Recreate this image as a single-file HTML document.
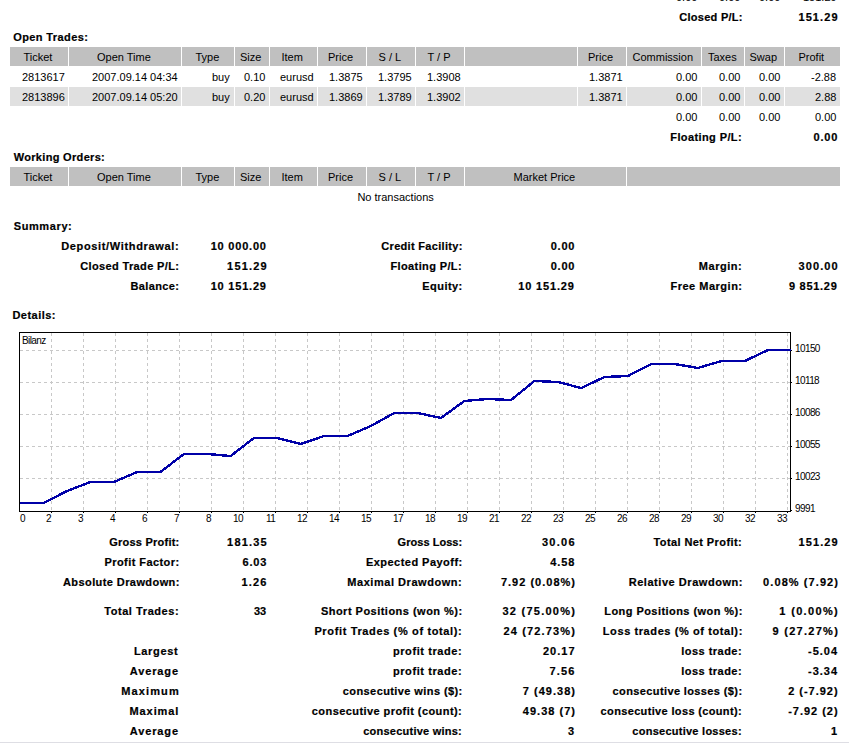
<!DOCTYPE html>
<html><head><meta charset="utf-8"><style>
html,body{margin:0;padding:0;background:#fff;width:849px;height:744px;overflow:hidden;position:relative}
.t{position:absolute;font:11px/13px 'Liberation Sans', sans-serif;color:#000;white-space:nowrap}
.r{position:absolute}
.b{font-weight:bold;-webkit-text-stroke:0.2px #000}
</style></head><body>
<div class="r" style="left:10px;top:47px;width:58px;height:19px;background:#c0c0c0"></div>
<div class="r" style="left:69px;top:47px;width:112px;height:19px;background:#c0c0c0"></div>
<div class="r" style="left:182px;top:47px;width:52px;height:19px;background:#c0c0c0"></div>
<div class="r" style="left:235px;top:47px;width:34px;height:19px;background:#c0c0c0"></div>
<div class="r" style="left:270px;top:47px;width:47px;height:19px;background:#c0c0c0"></div>
<div class="r" style="left:318px;top:47px;width:48px;height:19px;background:#c0c0c0"></div>
<div class="r" style="left:367px;top:47px;width:48px;height:19px;background:#c0c0c0"></div>
<div class="r" style="left:416px;top:47px;width:48px;height:19px;background:#c0c0c0"></div>
<div class="r" style="left:465px;top:47px;width:112px;height:19px;background:#c0c0c0"></div>
<div class="r" style="left:578px;top:47px;width:48px;height:19px;background:#c0c0c0"></div>
<div class="r" style="left:627px;top:47px;width:74px;height:19px;background:#c0c0c0"></div>
<div class="r" style="left:702px;top:47px;width:42px;height:19px;background:#c0c0c0"></div>
<div class="r" style="left:745px;top:47px;width:39px;height:19px;background:#c0c0c0"></div>
<div class="r" style="left:785px;top:47px;width:55px;height:19px;background:#c0c0c0"></div>
<div class="r" style="left:10px;top:87px;width:58px;height:19px;background:#e0e0e0"></div>
<div class="r" style="left:69px;top:87px;width:112px;height:19px;background:#e0e0e0"></div>
<div class="r" style="left:182px;top:87px;width:52px;height:19px;background:#e0e0e0"></div>
<div class="r" style="left:235px;top:87px;width:34px;height:19px;background:#e0e0e0"></div>
<div class="r" style="left:270px;top:87px;width:47px;height:19px;background:#e0e0e0"></div>
<div class="r" style="left:318px;top:87px;width:48px;height:19px;background:#e0e0e0"></div>
<div class="r" style="left:367px;top:87px;width:48px;height:19px;background:#e0e0e0"></div>
<div class="r" style="left:416px;top:87px;width:48px;height:19px;background:#e0e0e0"></div>
<div class="r" style="left:465px;top:87px;width:112px;height:19px;background:#e0e0e0"></div>
<div class="r" style="left:578px;top:87px;width:48px;height:19px;background:#e0e0e0"></div>
<div class="r" style="left:627px;top:87px;width:74px;height:19px;background:#e0e0e0"></div>
<div class="r" style="left:702px;top:87px;width:42px;height:19px;background:#e0e0e0"></div>
<div class="r" style="left:745px;top:87px;width:39px;height:19px;background:#e0e0e0"></div>
<div class="r" style="left:785px;top:87px;width:55px;height:19px;background:#e0e0e0"></div>
<div class="r" style="left:10px;top:167px;width:58px;height:19px;background:#c0c0c0"></div>
<div class="r" style="left:69px;top:167px;width:112px;height:19px;background:#c0c0c0"></div>
<div class="r" style="left:182px;top:167px;width:52px;height:19px;background:#c0c0c0"></div>
<div class="r" style="left:235px;top:167px;width:34px;height:19px;background:#c0c0c0"></div>
<div class="r" style="left:270px;top:167px;width:47px;height:19px;background:#c0c0c0"></div>
<div class="r" style="left:318px;top:167px;width:48px;height:19px;background:#c0c0c0"></div>
<div class="r" style="left:367px;top:167px;width:48px;height:19px;background:#c0c0c0"></div>
<div class="r" style="left:416px;top:167px;width:48px;height:19px;background:#c0c0c0"></div>
<div class="r" style="left:465px;top:167px;width:161px;height:19px;background:#c0c0c0"></div>
<div class="r" style="left:627px;top:167px;width:213px;height:19px;background:#c0c0c0"></div>
<div class="r" style="left:0px;top:742px;width:849px;height:1px;background:#dedee4"></div>
<svg width="849" height="744" style="position:absolute;left:0;top:0" shape-rendering="crispEdges">
<line x1="51.5" y1="333" x2="51.5" y2="511" stroke="#c8c8c8" stroke-dasharray="3 3"/>
<line x1="51.5" y1="512" x2="51.5" y2="513" stroke="#000"/>
<line x1="83.5" y1="333" x2="83.5" y2="511" stroke="#c8c8c8" stroke-dasharray="3 3"/>
<line x1="83.5" y1="512" x2="83.5" y2="513" stroke="#000"/>
<line x1="115.5" y1="333" x2="115.5" y2="511" stroke="#c8c8c8" stroke-dasharray="3 3"/>
<line x1="115.5" y1="512" x2="115.5" y2="513" stroke="#000"/>
<line x1="147.5" y1="333" x2="147.5" y2="511" stroke="#c8c8c8" stroke-dasharray="3 3"/>
<line x1="147.5" y1="512" x2="147.5" y2="513" stroke="#000"/>
<line x1="179.5" y1="333" x2="179.5" y2="511" stroke="#c8c8c8" stroke-dasharray="3 3"/>
<line x1="179.5" y1="512" x2="179.5" y2="513" stroke="#000"/>
<line x1="211.5" y1="333" x2="211.5" y2="511" stroke="#c8c8c8" stroke-dasharray="3 3"/>
<line x1="211.5" y1="512" x2="211.5" y2="513" stroke="#000"/>
<line x1="243.5" y1="333" x2="243.5" y2="511" stroke="#c8c8c8" stroke-dasharray="3 3"/>
<line x1="243.5" y1="512" x2="243.5" y2="513" stroke="#000"/>
<line x1="275.5" y1="333" x2="275.5" y2="511" stroke="#c8c8c8" stroke-dasharray="3 3"/>
<line x1="275.5" y1="512" x2="275.5" y2="513" stroke="#000"/>
<line x1="307.5" y1="333" x2="307.5" y2="511" stroke="#c8c8c8" stroke-dasharray="3 3"/>
<line x1="307.5" y1="512" x2="307.5" y2="513" stroke="#000"/>
<line x1="339.5" y1="333" x2="339.5" y2="511" stroke="#c8c8c8" stroke-dasharray="3 3"/>
<line x1="339.5" y1="512" x2="339.5" y2="513" stroke="#000"/>
<line x1="371.5" y1="333" x2="371.5" y2="511" stroke="#c8c8c8" stroke-dasharray="3 3"/>
<line x1="371.5" y1="512" x2="371.5" y2="513" stroke="#000"/>
<line x1="403.5" y1="333" x2="403.5" y2="511" stroke="#c8c8c8" stroke-dasharray="3 3"/>
<line x1="403.5" y1="512" x2="403.5" y2="513" stroke="#000"/>
<line x1="435.5" y1="333" x2="435.5" y2="511" stroke="#c8c8c8" stroke-dasharray="3 3"/>
<line x1="435.5" y1="512" x2="435.5" y2="513" stroke="#000"/>
<line x1="467.5" y1="333" x2="467.5" y2="511" stroke="#c8c8c8" stroke-dasharray="3 3"/>
<line x1="467.5" y1="512" x2="467.5" y2="513" stroke="#000"/>
<line x1="499.5" y1="333" x2="499.5" y2="511" stroke="#c8c8c8" stroke-dasharray="3 3"/>
<line x1="499.5" y1="512" x2="499.5" y2="513" stroke="#000"/>
<line x1="531.5" y1="333" x2="531.5" y2="511" stroke="#c8c8c8" stroke-dasharray="3 3"/>
<line x1="531.5" y1="512" x2="531.5" y2="513" stroke="#000"/>
<line x1="563.5" y1="333" x2="563.5" y2="511" stroke="#c8c8c8" stroke-dasharray="3 3"/>
<line x1="563.5" y1="512" x2="563.5" y2="513" stroke="#000"/>
<line x1="595.5" y1="333" x2="595.5" y2="511" stroke="#c8c8c8" stroke-dasharray="3 3"/>
<line x1="595.5" y1="512" x2="595.5" y2="513" stroke="#000"/>
<line x1="627.5" y1="333" x2="627.5" y2="511" stroke="#c8c8c8" stroke-dasharray="3 3"/>
<line x1="627.5" y1="512" x2="627.5" y2="513" stroke="#000"/>
<line x1="659.5" y1="333" x2="659.5" y2="511" stroke="#c8c8c8" stroke-dasharray="3 3"/>
<line x1="659.5" y1="512" x2="659.5" y2="513" stroke="#000"/>
<line x1="691.5" y1="333" x2="691.5" y2="511" stroke="#c8c8c8" stroke-dasharray="3 3"/>
<line x1="691.5" y1="512" x2="691.5" y2="513" stroke="#000"/>
<line x1="723.5" y1="333" x2="723.5" y2="511" stroke="#c8c8c8" stroke-dasharray="3 3"/>
<line x1="723.5" y1="512" x2="723.5" y2="513" stroke="#000"/>
<line x1="755.5" y1="333" x2="755.5" y2="511" stroke="#c8c8c8" stroke-dasharray="3 3"/>
<line x1="755.5" y1="512" x2="755.5" y2="513" stroke="#000"/>
<line x1="787.5" y1="333" x2="787.5" y2="511" stroke="#c8c8c8" stroke-dasharray="3 3"/>
<line x1="787.5" y1="512" x2="787.5" y2="513" stroke="#000"/>
<line x1="20" y1="350.5" x2="790" y2="350.5" stroke="#c8c8c8" stroke-dasharray="3 3"/>
<line x1="20" y1="382.5" x2="790" y2="382.5" stroke="#c8c8c8" stroke-dasharray="3 3"/>
<line x1="20" y1="414.5" x2="790" y2="414.5" stroke="#c8c8c8" stroke-dasharray="3 3"/>
<line x1="20" y1="446.5" x2="790" y2="446.5" stroke="#c8c8c8" stroke-dasharray="3 3"/>
<line x1="20" y1="478.5" x2="790" y2="478.5" stroke="#c8c8c8" stroke-dasharray="3 3"/>
<line x1="791" y1="350.5" x2="792" y2="350.5" stroke="#000"/>
<line x1="791" y1="382.5" x2="792" y2="382.5" stroke="#000"/>
<line x1="791" y1="414.5" x2="792" y2="414.5" stroke="#000"/>
<line x1="791" y1="446.5" x2="792" y2="446.5" stroke="#000"/>
<line x1="791" y1="478.5" x2="792" y2="478.5" stroke="#000"/>
<line x1="791" y1="510.5" x2="792" y2="510.5" stroke="#000"/>
<rect x="19.5" y="332.5" width="771" height="179" fill="none" stroke="#000"/>
<polyline points="20.3,503.0 43.7,503.0 67.0,491.0 90.4,482.0 113.8,482.0 137.2,472.0 160.5,472.0 183.9,454.0 207.3,454.0 230.6,456.0 254.0,438.0 277.4,438.0 300.7,444.0 324.1,436.0 347.5,436.0 370.9,426.0 394.2,413.0 417.6,413.0 441.0,418.0 464.3,401.0 487.7,399.0 511.1,400.0 534.4,381.0 557.8,382.0 581.2,388.0 604.5,377.0 627.9,376.0 651.3,364.0 674.7,364.0 698.0,368.0 721.4,361.0 744.8,361.0 768.1,350.0 790.5,350.0" fill="none" stroke="#0000a8" stroke-width="2.4"/>
</svg>
<div class="t" style="left:676.00px;top:-9px;">0.00</div>
<div class="t" style="left:719.00px;top:-9px;">0.00</div>
<div class="t" style="left:759.00px;top:-9px;">0.00</div>
<div class="t" style="left:803.00px;top:-9px;">151.29</div>
<div class="t b" style="left:679.20px;top:11px;letter-spacing:0.280px;">Closed P/L:</div>
<div class="t b" style="left:798.40px;top:11px;letter-spacing:1.120px;">151.29</div>
<div class="t b" style="left:13.20px;top:31px;letter-spacing:0.400px;">Open Trades:</div>
<div class="t" style="left:23.50px;top:51px;">Ticket</div>
<div class="t" style="left:97.00px;top:51px;">Open Time</div>
<div class="t" style="left:195.50px;top:51px;">Type</div>
<div class="t" style="left:240.00px;top:51px;">Size</div>
<div class="t" style="left:281.50px;top:51px;">Item</div>
<div class="t" style="left:328.00px;top:51px;">Price</div>
<div class="t" style="left:378.50px;top:51px;">S / L</div>
<div class="t" style="left:427.50px;top:51px;">T / P</div>
<div class="t" style="left:588.00px;top:51px;">Price</div>
<div class="t" style="left:632.50px;top:51px;">Commission</div>
<div class="t" style="left:708.00px;top:51px;">Taxes</div>
<div class="t" style="left:749.50px;top:51px;">Swap</div>
<div class="t" style="left:798.50px;top:51px;">Profit</div>
<div class="t" style="left:22.00px;top:71px;">2813617</div>
<div class="t" style="left:92.00px;top:71px;">2007.09.14 04:34</div>
<div class="t" style="left:212.00px;top:71px;">buy</div>
<div class="t" style="left:244.00px;top:71px;">0.10</div>
<div class="t" style="left:280.00px;top:71px;">eurusd</div>
<div class="t" style="left:329.00px;top:71px;">1.3875</div>
<div class="t" style="left:378.00px;top:71px;">1.3795</div>
<div class="t" style="left:427.00px;top:71px;">1.3908</div>
<div class="t" style="left:589.00px;top:71px;">1.3871</div>
<div class="t" style="left:676.00px;top:71px;">0.00</div>
<div class="t" style="left:719.00px;top:71px;">0.00</div>
<div class="t" style="left:759.00px;top:71px;">0.00</div>
<div class="t" style="left:811.00px;top:71px;">-2.88</div>
<div class="t" style="left:22.00px;top:91px;">2813896</div>
<div class="t" style="left:92.00px;top:91px;">2007.09.14 05:20</div>
<div class="t" style="left:212.00px;top:91px;">buy</div>
<div class="t" style="left:244.00px;top:91px;">0.20</div>
<div class="t" style="left:280.00px;top:91px;">eurusd</div>
<div class="t" style="left:329.00px;top:91px;">1.3869</div>
<div class="t" style="left:378.00px;top:91px;">1.3789</div>
<div class="t" style="left:427.00px;top:91px;">1.3902</div>
<div class="t" style="left:589.00px;top:91px;">1.3871</div>
<div class="t" style="left:676.00px;top:91px;">0.00</div>
<div class="t" style="left:719.00px;top:91px;">0.00</div>
<div class="t" style="left:759.00px;top:91px;">0.00</div>
<div class="t" style="left:815.00px;top:91px;">2.88</div>
<div class="t" style="left:676.00px;top:111px;">0.00</div>
<div class="t" style="left:719.00px;top:111px;">0.00</div>
<div class="t" style="left:759.00px;top:111px;">0.00</div>
<div class="t" style="left:815.00px;top:111px;">0.00</div>
<div class="t b" style="left:670.30px;top:131px;letter-spacing:0.392px;">Floating P/L:</div>
<div class="t b" style="left:813.60px;top:131px;letter-spacing:0.800px;">0.00</div>
<div class="t b" style="left:13.70px;top:151px;letter-spacing:0.321px;">Working Orders:</div>
<div class="t" style="left:23.50px;top:171px;">Ticket</div>
<div class="t" style="left:97.00px;top:171px;">Open Time</div>
<div class="t" style="left:195.50px;top:171px;">Type</div>
<div class="t" style="left:240.00px;top:171px;">Size</div>
<div class="t" style="left:281.50px;top:171px;">Item</div>
<div class="t" style="left:328.00px;top:171px;">Price</div>
<div class="t" style="left:378.50px;top:171px;">S / L</div>
<div class="t" style="left:427.50px;top:171px;">T / P</div>
<div class="t" style="left:513.50px;top:171px;">Market Price</div>
<div class="t" style="left:357.40px;top:191px;">No transactions</div>
<div class="t b" style="left:13.70px;top:220px;letter-spacing:0.614px;">Summary:</div>
<div class="t b" style="left:61.20px;top:240px;letter-spacing:0.656px;">Deposit/Withdrawal:</div>
<div class="t b" style="left:210.70px;top:240px;letter-spacing:0.788px;">10 000.00</div>
<div class="t b" style="left:381.30px;top:240px;letter-spacing:0.313px;">Credit Facility:</div>
<div class="t b" style="left:550.70px;top:240px;letter-spacing:0.767px;">0.00</div>
<div class="t b" style="left:80.30px;top:260px;letter-spacing:0.356px;">Closed Trade P/L:</div>
<div class="t b" style="left:227.10px;top:260px;letter-spacing:1.180px;">151.29</div>
<div class="t b" style="left:390.50px;top:260px;letter-spacing:0.375px;">Floating P/L:</div>
<div class="t b" style="left:550.70px;top:260px;letter-spacing:0.767px;">0.00</div>
<div class="t b" style="left:698.80px;top:260px;letter-spacing:0.533px;">Margin:</div>
<div class="t b" style="left:798.50px;top:260px;letter-spacing:1.100px;">300.00</div>
<div class="t b" style="left:130.50px;top:280px;letter-spacing:0.357px;">Balance:</div>
<div class="t b" style="left:210.70px;top:280px;letter-spacing:0.788px;">10 151.29</div>
<div class="t b" style="left:422.30px;top:280px;letter-spacing:0.450px;">Equity:</div>
<div class="t b" style="left:518.20px;top:280px;letter-spacing:0.850px;">10 151.29</div>
<div class="t b" style="left:670.50px;top:280px;letter-spacing:0.500px;">Free Margin:</div>
<div class="t b" style="left:789.00px;top:280px;letter-spacing:0.714px;">9 851.29</div>
<div class="t b" style="left:12.40px;top:309px;letter-spacing:0.486px;">Details:</div>
<div class="t b" style="left:109.30px;top:536px;letter-spacing:0.225px;">Gross Profit:</div>
<div class="t b" style="left:227.10px;top:536px;letter-spacing:1.180px;">181.35</div>
<div class="t b" style="left:397.60px;top:536px;letter-spacing:0.040px;">Gross Loss:</div>
<div class="t b" style="left:541.90px;top:536px;letter-spacing:1.275px;">30.06</div>
<div class="t b" style="left:653.50px;top:536px;letter-spacing:0.406px;">Total Net Profit:</div>
<div class="t b" style="left:798.60px;top:536px;letter-spacing:1.080px;">151.29</div>
<div class="t b" style="left:104.50px;top:556px;letter-spacing:0.423px;">Profit Factor:</div>
<div class="t b" style="left:242.40px;top:556px;letter-spacing:0.867px;">6.03</div>
<div class="t b" style="left:365.90px;top:556px;letter-spacing:0.473px;">Expected Payoff:</div>
<div class="t b" style="left:550.20px;top:556px;letter-spacing:0.933px;">4.58</div>
<div class="t b" style="left:63.00px;top:576px;letter-spacing:0.412px;">Absolute Drawdown:</div>
<div class="t b" style="left:241.40px;top:576px;letter-spacing:1.200px;">1.26</div>
<div class="t b" style="left:347.30px;top:576px;letter-spacing:0.544px;">Maximal Drawdown:</div>
<div class="t b" style="left:500.90px;top:576px;letter-spacing:1.009px;">7.92 (0.08%)</div>
<div class="t b" style="left:628.70px;top:576px;letter-spacing:0.547px;">Relative Drawdown:</div>
<div class="t b" style="left:763.10px;top:576px;letter-spacing:1.082px;">0.08% (7.92)</div>
<div class="t b" style="left:104.20px;top:605px;letter-spacing:0.567px;">Total Trades:</div>
<div class="t b" style="left:254.00px;top:605px;">33</div>
<div class="t b" style="left:320.90px;top:605px;letter-spacing:0.483px;">Short Positions (won %):</div>
<div class="t b" style="left:502.40px;top:605px;letter-spacing:1.260px;">32 (75.00%)</div>
<div class="t b" style="left:604.30px;top:605px;letter-spacing:0.441px;">Long Positions (won %):</div>
<div class="t b" style="left:779.30px;top:605px;letter-spacing:1.338px;">1 (0.00%)</div>
<div class="t b" style="left:314.40px;top:625px;letter-spacing:0.638px;">Profit Trades (% of total):</div>
<div class="t b" style="left:503.40px;top:625px;letter-spacing:1.160px;">24 (72.73%)</div>
<div class="t b" style="left:602.80px;top:625px;letter-spacing:0.592px;">Loss trades (% of total):</div>
<div class="t b" style="left:772.60px;top:625px;letter-spacing:1.267px;">9 (27.27%)</div>
<div class="t b" style="left:133.90px;top:645px;letter-spacing:0.683px;">Largest</div>
<div class="t b" style="left:392.90px;top:645px;letter-spacing:0.592px;">profit trade:</div>
<div class="t b" style="left:542.90px;top:645px;letter-spacing:1.025px;">20.17</div>
<div class="t b" style="left:681.30px;top:645px;letter-spacing:0.470px;">loss trade:</div>
<div class="t b" style="left:808.10px;top:645px;letter-spacing:0.975px;">-5.04</div>
<div class="t b" style="left:129.80px;top:665px;letter-spacing:0.867px;">Average</div>
<div class="t b" style="left:392.90px;top:665px;letter-spacing:0.592px;">profit trade:</div>
<div class="t b" style="left:549.40px;top:665px;letter-spacing:1.200px;">7.56</div>
<div class="t b" style="left:681.30px;top:665px;letter-spacing:0.470px;">loss trade:</div>
<div class="t b" style="left:808.10px;top:665px;letter-spacing:0.975px;">-3.34</div>
<div class="t b" style="left:121.30px;top:685px;letter-spacing:1.117px;">Maximum</div>
<div class="t b" style="left:342.80px;top:685px;letter-spacing:0.410px;">consecutive wins ($):</div>
<div class="t b" style="left:522.80px;top:685px;letter-spacing:1.025px;">7 (49.38)</div>
<div class="t b" style="left:612.60px;top:685px;letter-spacing:0.382px;">consecutive losses ($):</div>
<div class="t b" style="left:788.20px;top:685px;letter-spacing:0.975px;">2 (-7.92)</div>
<div class="t b" style="left:129.50px;top:705px;letter-spacing:0.917px;">Maximal</div>
<div class="t b" style="left:311.80px;top:705px;letter-spacing:0.431px;">consecutive profit (count):</div>
<div class="t b" style="left:522.80px;top:705px;letter-spacing:1.025px;">49.38 (7)</div>
<div class="t b" style="left:600.60px;top:705px;letter-spacing:0.350px;">consecutive loss (count):</div>
<div class="t b" style="left:788.20px;top:705px;letter-spacing:0.975px;">-7.92 (2)</div>
<div class="t b" style="left:129.80px;top:725px;letter-spacing:0.867px;">Average</div>
<div class="t b" style="left:363.20px;top:725px;letter-spacing:0.238px;">consecutive wins:</div>
<div class="t b" style="left:568.00px;top:725px;">3</div>
<div class="t b" style="left:632.30px;top:725px;letter-spacing:0.261px;">consecutive losses:</div>
<div class="t b" style="left:831.00px;top:725px;">1</div>
<div class="t" style="left:22.00px;top:334px;font-size:10px;letter-spacing:-0.600px;">Bilanz</div>
<div class="t" style="left:20.00px;top:512px;font-size:10px;letter-spacing:-0.600px;">0</div>
<div class="t" style="left:46.00px;top:512px;font-size:10px;letter-spacing:-0.600px;">2</div>
<div class="t" style="left:78.00px;top:512px;font-size:10px;letter-spacing:-0.600px;">3</div>
<div class="t" style="left:110.00px;top:512px;font-size:10px;letter-spacing:-0.600px;">4</div>
<div class="t" style="left:142.00px;top:512px;font-size:10px;letter-spacing:-0.600px;">6</div>
<div class="t" style="left:174.00px;top:512px;font-size:10px;letter-spacing:-0.600px;">7</div>
<div class="t" style="left:206.00px;top:512px;font-size:10px;letter-spacing:-0.600px;">8</div>
<div class="t" style="left:233.00px;top:512px;font-size:10px;letter-spacing:-0.600px;">10</div>
<div class="t" style="left:266.00px;top:512px;font-size:10px;letter-spacing:-0.600px;">11</div>
<div class="t" style="left:297.00px;top:512px;font-size:10px;letter-spacing:-0.600px;">12</div>
<div class="t" style="left:329.00px;top:512px;font-size:10px;letter-spacing:-0.600px;">14</div>
<div class="t" style="left:361.00px;top:512px;font-size:10px;letter-spacing:-0.600px;">15</div>
<div class="t" style="left:393.00px;top:512px;font-size:10px;letter-spacing:-0.600px;">17</div>
<div class="t" style="left:425.00px;top:512px;font-size:10px;letter-spacing:-0.600px;">18</div>
<div class="t" style="left:457.00px;top:512px;font-size:10px;letter-spacing:-0.600px;">19</div>
<div class="t" style="left:489.00px;top:512px;font-size:10px;letter-spacing:-0.600px;">21</div>
<div class="t" style="left:521.00px;top:512px;font-size:10px;letter-spacing:-0.600px;">22</div>
<div class="t" style="left:553.00px;top:512px;font-size:10px;letter-spacing:-0.600px;">23</div>
<div class="t" style="left:585.00px;top:512px;font-size:10px;letter-spacing:-0.600px;">25</div>
<div class="t" style="left:617.00px;top:512px;font-size:10px;letter-spacing:-0.600px;">26</div>
<div class="t" style="left:649.00px;top:512px;font-size:10px;letter-spacing:-0.600px;">28</div>
<div class="t" style="left:681.00px;top:512px;font-size:10px;letter-spacing:-0.600px;">29</div>
<div class="t" style="left:713.00px;top:512px;font-size:10px;letter-spacing:-0.600px;">30</div>
<div class="t" style="left:745.00px;top:512px;font-size:10px;letter-spacing:-0.600px;">32</div>
<div class="t" style="left:777.00px;top:512px;font-size:10px;letter-spacing:-0.600px;">33</div>
<div class="t" style="left:795.00px;top:342px;font-size:10px;letter-spacing:-0.600px;">10150</div>
<div class="t" style="left:795.00px;top:374px;font-size:10px;letter-spacing:-0.600px;">10118</div>
<div class="t" style="left:795.00px;top:406px;font-size:10px;letter-spacing:-0.600px;">10086</div>
<div class="t" style="left:795.00px;top:438px;font-size:10px;letter-spacing:-0.600px;">10055</div>
<div class="t" style="left:795.00px;top:470px;font-size:10px;letter-spacing:-0.600px;">10023</div>
<div class="t" style="left:795.00px;top:502px;font-size:10px;letter-spacing:-0.600px;">9991</div>
</body></html>
